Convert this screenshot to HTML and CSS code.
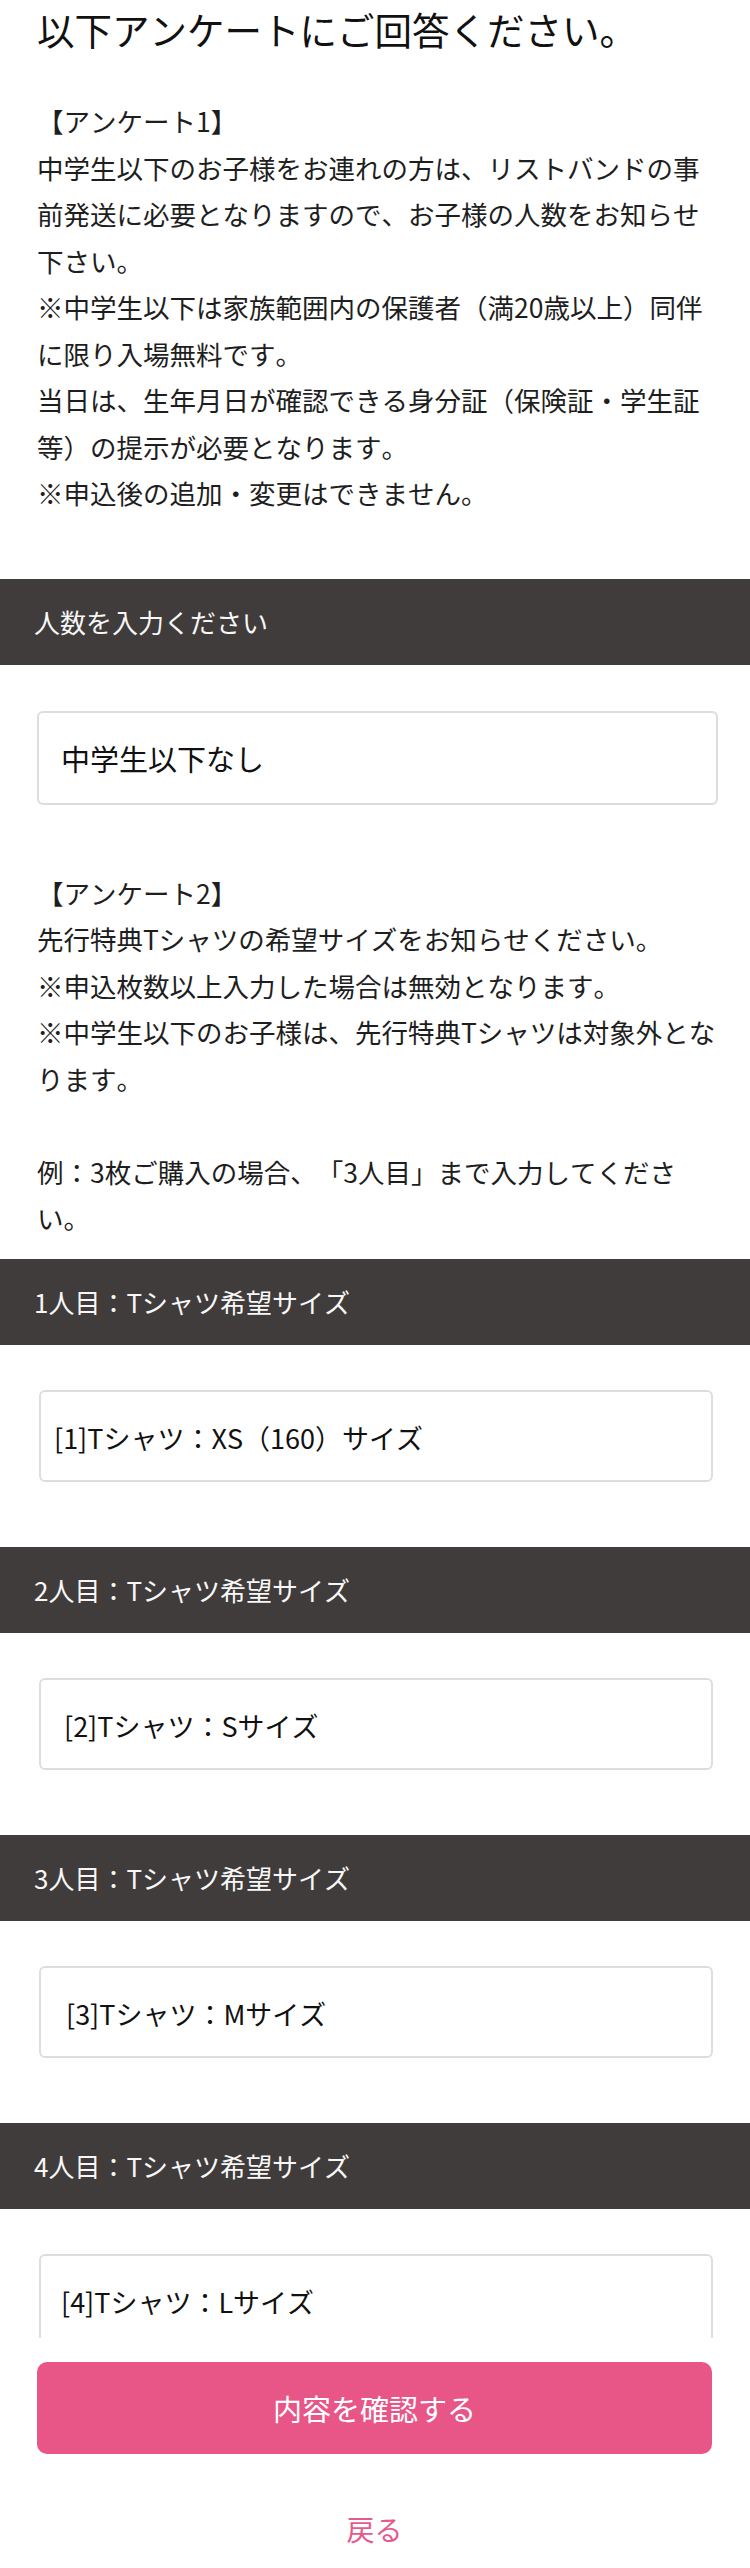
FILE: index.html
```html
<!DOCTYPE html>
<html lang="ja">
<head>
<meta charset="utf-8">
<title>アンケート</title>
<link rel="stylesheet" href="styles.css">
</head>
<body>
<div class="page">
  <div class="main">
    <h1 class="title">以下アンケートにご回答ください。</h1>

    <p class="notice notice-1">【アンケート1】<br>中学生以下のお子様をお連れの方は、リストバンドの事前発送に必要となりますので、お子様の人数をお知らせ下さい。<br>※中学生以下は家族範囲内の保護者（満20歳以上）同伴に限り入場無料です。<br>当日は、生年月日が確認できる身分証（保険証・学生証等）の提示が必要となります。<br>※申込後の追加・変更はできません。</p>

    <section class="block block-count">
      <div class="bar">人数を入力ください</div>
      <div class="field">
        <div class="field-box field-box-wide">中学生以下なし</div>
      </div>
    </section>

    <p class="notice notice-2">【アンケート2】<br>先行特典Tシャツの希望サイズをお知らせください。<br>※申込枚数以上入力した場合は無効となります。<br>※中学生以下のお子様は、先行特典Tシャツは対象外となります。<br><br>例：3枚ご購入の場合、「3人目」まで入力してください。</p>

    <section class="block block-size">
      <div class="bar">1人目：Tシャツ希望サイズ</div>
      <div class="field field-size">
        <div class="field-box field-box-size indent-1">[1]Tシャツ：XS（160）サイズ</div>
      </div>
    </section>

    <section class="block block-size">
      <div class="bar">2人目：Tシャツ希望サイズ</div>
      <div class="field field-size">
        <div class="field-box field-box-size indent-2">[2]Tシャツ：Sサイズ</div>
      </div>
    </section>

    <section class="block block-size">
      <div class="bar">3人目：Tシャツ希望サイズ</div>
      <div class="field field-size">
        <div class="field-box field-box-size indent-3">[3]Tシャツ：Mサイズ</div>
      </div>
    </section>

    <section class="block block-size">
      <div class="bar">4人目：Tシャツ希望サイズ</div>
      <div class="field field-size">
        <div class="field-box field-box-size indent-4">[4]Tシャツ：Lサイズ</div>
      </div>
    </section>
  </div>

  <div class="footer">
    <button class="confirm" type="button">内容を確認する</button>
    <a class="back" href="#">戻る</a>
  </div>
</div>
</body>
</html>
```
FILE: styles.css
```css
* {
  box-sizing: border-box;
}

html, body {
  margin: 0;
  padding: 0;
  background: #ffffff;
}

body {
  font-family: "Noto Sans CJK JP", "Noto Sans", "Liberation Sans", sans-serif;
  color: #1c1c1c;
  text-spacing-trim: space-all;
  font-kerning: none;
}

.page {
  width: 750px;
  height: 2568px;
  display: flex;
  flex-direction: column;
  overflow: hidden;
}

.main {
  height: 2338px;
  flex: none;
  overflow: hidden;
}

.title {
  margin: 0;
  padding: 2px 10px 0 37px;
  font-size: 37.5px;
  line-height: 54px;
  font-weight: 400;
  color: #111111;
  white-space: nowrap;
}

.notice {
  padding: 0 29px 0 37px;
  font-size: 26.5px;
  line-height: 46.5px;
  color: #1e1e1e;
}

.notice-1 {
  margin: 42px 0 62px;
}

.notice-2 {
  margin: 65px 0 17px;
}

.bar {
  height: 86px;
  line-height: 86px;
  padding-left: 34px;
  background: #403c3b;
  color: #f7f7f7;
  font-size: 26px;
}

.field {
  padding: 46px 32px 0 37px;
}

.field-size {
  padding: 45px 37px 0 39px;
}

.block-size {
  margin-bottom: 65px;
}

.field-box {
  background: #ffffff;
  border: 2px solid #dddddd;
  border-radius: 6px;
  color: #111111;
  font-size: 29px;
  display: flex;
  align-items: center;
}

.field-box-wide {
  height: 94px;
  padding-left: 22px;
}

.field-box-size {
  height: 92px;
  padding-top: 4px;
  padding-left: 13px;
  font-size: 27px;
}

.indent-2 {
  padding-left: 23px;
}

.indent-3 {
  padding-left: 25px;
}

.indent-4 {
  padding-left: 20px;
}

.footer {
  flex: 1;
  background: #ffffff;
  padding: 24px 38px 0 37px;
  display: flex;
  flex-direction: column;
}

.confirm {
  height: 92px;
  width: 100%;
  border: none;
  border-radius: 10px;
  background: #e85587;
  color: #ffffff;
  font-family: inherit;
  font-size: 29px;
  line-height: 92px;
  padding: 0;
}

.back {
  margin-top: 52px;
  line-height: 46px;
  font-size: 28px;
  color: #e55a8d;
  text-align: center;
  text-decoration: none;
}
```
